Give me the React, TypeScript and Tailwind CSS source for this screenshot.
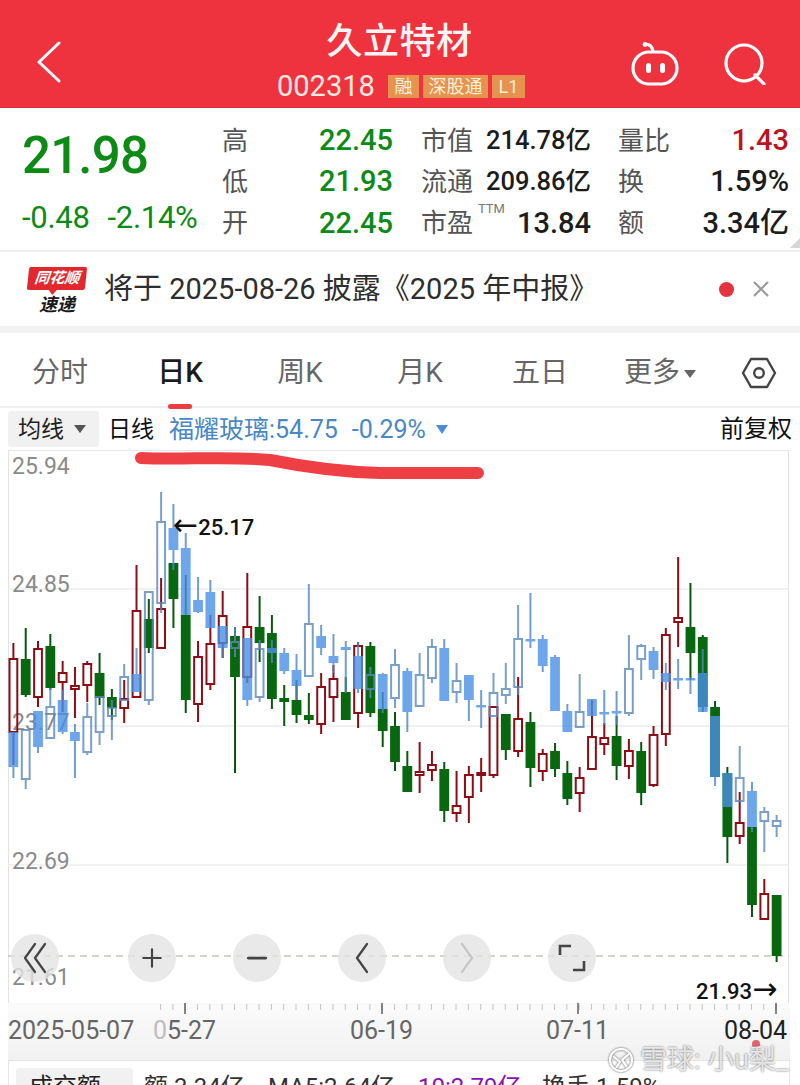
import React from 'react';
import { Minus, Plus } from 'lucide-react';

const FONT = "font-['Roboto','Noto_Sans_CJK_SC',sans-serif]";

type Bar = [number, number, number, number, number];

// [high, body top, body bottom, low, hollow] in page pixels
const MAIN: Bar[] = [
  [643, 659, 732, 765, 1], [628, 659, 695, 697, 0], [641, 649, 697, 707, 1], [634, 646, 688, 690, 0],
  [661, 673, 682, 712, 1], [667, 686, 689, 718, 1], [661, 664, 685, 702, 1], [653, 673, 698, 705, 0],
  [689, 697, 708, 720, 0], [680, 699, 708, 723, 1], [565, 611, 697, 697, 1], [599, 619, 648, 653, 0],
  [578, 609, 648, 648, 1], [563, 563, 599, 628, 0], [575, 615, 700, 713, 0], [641, 657, 704, 722, 1],
  [615, 644, 684, 690, 1], [591, 616, 643, 658, 1], [627, 636, 677, 773, 0], [573, 627, 677, 683, 1],
  [596, 627, 643, 662, 0], [615, 633, 699, 709, 0], [685, 698, 702, 726, 0], [680, 700, 715, 723, 0],
  [693, 715, 720, 724, 0], [673, 687, 724, 734, 1], [665, 679, 697, 722, 1], [677, 692, 720, 720, 0],
  [642, 646, 713, 728, 1], [642, 646, 713, 717, 0], [692, 709, 731, 747, 0], [712, 726, 762, 771, 0],
  [751, 766, 792, 792, 0], [742, 772, 775, 793, 1], [751, 765, 770, 781, 1], [762, 769, 811, 822, 0],
  [771, 806, 813, 822, 1], [766, 775, 797, 823, 1], [758, 773, 775, 792, 1], [707, 707, 775, 778, 1],
  [714, 714, 750, 760, 0], [677, 719, 751, 757, 1], [712, 722, 768, 787, 0], [749, 754, 771, 781, 1],
  [743, 751, 769, 777, 0], [761, 773, 799, 805, 0], [767, 778, 793, 812, 1], [700, 737, 769, 769, 1],
  [723, 738, 744, 755, 1], [716, 736, 766, 780, 0], [739, 751, 766, 779, 1], [742, 751, 793, 805, 0],
  [726, 735, 785, 787, 1], [628, 635, 734, 746, 1], [557, 618, 622, 647, 1], [583, 627, 653, 680, 0],
  [635, 637, 707, 712, 0], [701, 707, 777, 777, 0], [767, 773, 837, 863, 0], [792, 823, 836, 844, 1],
  [827, 827, 905, 917, 0], [879, 894, 919, 919, 1], [895, 895, 956, 962, 0],
];

// overlay series, 福耀玻璃
const OVERLAY: Bar[] = [
  [732, 732, 767, 778, 0], [730, 730, 779, 789, 1], [711, 711, 747, 753, 0], [688, 707, 738, 738, 1],
  [690, 700, 732, 734, 0], [724, 732, 741, 778, 0], [703, 717, 752, 755, 1], [697, 697, 732, 745, 1],
  [700, 708, 716, 740, 1], [664, 677, 700, 700, 1], [648, 674, 692, 692, 0], [592, 592, 700, 705, 1],
  [492, 522, 603, 613, 1], [504, 528, 550, 570, 0], [533, 548, 615, 615, 0], [577, 600, 612, 613, 0],
  [580, 592, 628, 628, 0], [626, 626, 648, 658, 0], [627, 642, 648, 657, 1], [638, 638, 700, 706, 0],
  [640, 649, 697, 702, 1], [640, 648, 653, 663, 0], [648, 653, 671, 674, 0], [654, 670, 686, 700, 0],
  [584, 624, 676, 676, 1], [625, 636, 648, 655, 0], [634, 656, 663, 673, 0], [641, 647, 650, 693, 0],
  [642, 656, 689, 693, 0], [667, 675, 689, 698, 1], [673, 674, 709, 713, 0], [649, 665, 698, 708, 1],
  [668, 671, 712, 732, 0], [653, 675, 706, 706, 1], [639, 647, 678, 683, 1], [639, 648, 701, 701, 0],
  [663, 681, 692, 703, 1], [675, 675, 700, 721, 0], [690, 705, 707, 728, 0], [673, 693, 716, 716, 1],
  [663, 689, 695, 704, 1], [605, 639, 687, 695, 1], [593, 639, 641, 648, 0], [635, 639, 666, 672, 0],
  [655, 657, 711, 711, 0], [704, 711, 732, 732, 0], [674, 712, 727, 727, 1], [699, 699, 716, 716, 0],
  [690, 712, 714, 725, 0], [691, 711, 713, 725, 0], [635, 669, 713, 716, 1], [644, 646, 659, 680, 1],
  [647, 651, 670, 679, 0], [663, 673, 682, 690, 0], [659, 678, 680, 689, 0], [677, 678, 680, 694, 0],
  [649, 673, 712, 712, 0], [716, 716, 777, 786, 0], [773, 773, 807, 807, 0], [746, 778, 801, 801, 1],
  [782, 791, 827, 832, 0], [807, 812, 821, 852, 1], [815, 821, 826, 837, 1],
];

const barX = (i: number) => 13.4 + i * 12.31;

const Candles = ({ bars, solid, hollow, wick, hollowWick }: { bars: Bar[]; solid: string; hollow: string; wick: string; hollowWick: string }) => (
  <g>
    {bars.map(([hi, top, bot, lo, open], i) => {
      const x = barX(i);
      const lineColor = open ? hollowWick : wick;
      return (
        <g key={i}>
          <line x1={x} x2={x} y1={hi} y2={top} stroke={lineColor} strokeWidth={2} />
          <line x1={x} x2={x} y1={bot} y2={lo} stroke={lineColor} strokeWidth={2} />
          {open ? (
            <rect x={x - 3.9} y={top} width={7.8} height={bot - top} fill="none" stroke={hollow} strokeWidth={2} />
          ) : (
            <rect x={x - 4.9} y={top} width={9.8} height={Math.max(bot - top, 2.5)} fill={solid} />
          )}
        </g>
      );
    })}
  </g>
);

const AXIS_LABELS: [string, number][] = [['25.94', 474], ['24.85', 592], ['23.77', 730], ['22.69', 869], ['21.61', 985]];

const KChart = () => (
  <svg viewBox="0 450 800 553" className="block h-[553px] w-[800px] font-['Roboto',sans-serif]">
    <line x1="8" x2="789" y1="450.5" y2="450.5" stroke="#e8e8e8" />
    <line x1="8.5" x2="8.5" y1="450" y2="1003" stroke="#e2e2e2" />
    <line x1="788.5" x2="788.5" y1="450" y2="1003" stroke="#e2e2e2" />
    {[589, 726, 865].map((y) => (
      <line key={y} x1="8" x2="789" y1={y} y2={y} stroke="#ececec" strokeWidth={1.5} />
    ))}
    <line x1="8" x2="789" y1="956" y2="956" stroke="#c9c5ba" strokeWidth={1.3} strokeDasharray="7 5" />
    {AXIS_LABELS.map(([t, y]) => (
      <text key={t} x="12" y={y} fontSize="23" fill="#8a8a8a">{t}</text>
    ))}
    <Candles bars={MAIN} solid="#07680f" hollow="#8c0d16" wick="#07570f" hollowWick="#8c0d16" />
    <g opacity={0.8}>
      <Candles bars={OVERLAY} solid="#4a90e8" hollow="#5a88bb" wick="#4f86c4" hollowWick="#5a88bb" />
    </g>
    <text x="173" y="535" fontSize="22" fontWeight="500" fill="#111">
      <tspan fontFamily="'DejaVu Sans',sans-serif" fontSize="30">←</tspan>25.17
    </text>
    <text x="696" y="999" fontSize="22" fontWeight="500" fill="#111">
      21.93<tspan fontFamily="'DejaVu Sans',sans-serif" fontSize="30">→</tspan>
    </text>
    {/* hand drawn marker under the overlay name */}
    <path d="M141 458 C180 460 230 456 270 460 C310 468 340 472 380 473 L478 473" fill="none" stroke="#ee3f45" strokeWidth={12} strokeLinecap="round" />
  </svg>
);

const ChartButton = ({ children }: { children: React.ReactNode }) => (
  <div className="flex h-[48px] w-[48px] items-center justify-center rounded-full bg-[#e3e3e3]/80 text-[#444]">
    {children}
  </div>
);

// tall thin chevrons used by the pan buttons
const Chevron = ({ d, color = '#444', width = 20 }: { d: string; color?: string; width?: number }) => (
  <svg width={width} height="32" viewBox={`0 0 ${width} 32`} fill="none" stroke={color} strokeWidth="2.2" strokeLinecap="round" strokeLinejoin="round">
    <path d={d} />
  </svg>
);

const StatCell = ({ label, value, color, wide }: { label: React.ReactNode; value: string; color: string; wide: string }) => (
  <div className={`flex items-center justify-between ${wide}`}>
    <span className="text-[26px] leading-none text-[#555]">{label}</span>
    <span className={`text-[29px] font-medium leading-none ${color}`}>{value}</span>
  </div>
);

const TICKS = Array.from({ length: 51 }, (_, i) => 160.6 + i * 12.31);

export default function App() {
  return (
    <div className={`relative h-[1085px] w-[800px] overflow-hidden bg-white ${FONT}`}>
      {/* Title bar */}
      <header className="grid h-[108px] grid-cols-[277px_1fr_277px] border-b border-[#d8323c] bg-[#ee333f] text-white">
        <div className="flex items-center pl-[36px] pt-[16px]">
          <svg width="26" height="42" viewBox="0 0 26 42" fill="none" stroke="#fff" strokeWidth="3" strokeLinecap="round" strokeLinejoin="round">
            <path d="M23 2 L3 21 L23 40" />
          </svg>
        </div>
        <div className="flex flex-col items-center">
          <div className="mt-[18px] pr-[3px] text-[36px] font-medium leading-[48px] tracking-[0.5px] text-[#fff5f3]">久立特材</div>
          <div className="mt-[8px] flex w-full items-center text-[#ffe9e0]">
            <span className="w-[111px] text-[29px] leading-[24px]">002318</span>
            <div className="flex items-center gap-[4px] text-[18px] leading-[23px] text-[#fff0d8]">
              <span className="flex h-[23px] w-[31px] items-center justify-center bg-[#e5934f]">融</span>
              <span className="flex h-[23px] w-[65px] items-center justify-center bg-[#e5934f]">深股通</span>
              <span className="flex h-[23px] w-[33px] items-center justify-center bg-[#e5934f]">L1</span>
            </div>
          </div>
        </div>
        <div className="flex items-center justify-end gap-[43px] pr-[36px] pt-[20px]">
          <svg width="50" height="46" viewBox="0 0 50 46" fill="none" stroke="#fff" strokeWidth="3.2" className="-translate-x-[1px]">
            <rect x="3" y="11" width="44" height="32" rx="16" />
            <path d="M15 3.5 C19 3 22 5 23 10" strokeLinecap="round" />
            <circle cx="15" cy="3.5" r="2.4" fill="#fff" stroke="none" />
            <rect x="16" y="22" width="5" height="10" rx="2.5" fill="#fff" stroke="none" />
            <rect x="30" y="22" width="5" height="10" rx="2.5" fill="#fff" stroke="none" />
          </svg>
          <svg width="42" height="42" viewBox="0 0 42 42" fill="none" stroke="#fff" strokeWidth="3.2" strokeLinecap="round">
            <circle cx="20" cy="20" r="18" />
            <path d="M31 32 L40 41" />
          </svg>
        </div>
      </header>

      {/* Quote summary */}
      <section className="relative flex h-[144px] border-b-2 border-[#eeeeee]">
        <div className="flex w-[222px] flex-col pl-[22px]">
          <div className="mt-[20px] text-[51px] font-medium leading-[56px] tracking-[-0.8px] text-[#0c8a16]">21.98</div>
          <div className="mt-[20px] flex gap-[18px] text-[31px] font-normal leading-[28px] tracking-[-0.3px] text-[#0c8a16]">
            <span>-0.48</span>
            <span>-2.14%</span>
          </div>
        </div>
        <div className="grid h-full w-[172px] grid-rows-3 pb-[6px] pt-[12px]">
          <StatCell label="高" value="22.45" color="text-[#0c8a16]" wide="w-[171px]" />
          <StatCell label="低" value="21.93" color="text-[#0c8a16]" wide="w-[171px]" />
          <StatCell label="开" value="22.45" color="text-[#0c8a16]" wide="w-[171px]" />
        </div>
        <div className="ml-[27px] grid h-full w-[170px] grid-rows-3 pb-[6px] pt-[12px]">
          <StatCell label="市值" value="214.78亿" color="!text-[25.5px] text-[#1c1c1c]" wide="w-[170px]" />
          <StatCell label="流通" value="209.86亿" color="!text-[25.5px] text-[#1c1c1c]" wide="w-[170px]" />
          <StatCell
            label={<span className="relative">市盈<sup className="absolute left-[57px] top-[-6px] text-[13px] leading-none text-[#777]">TTM</sup></span>}
            value="13.84"
            color="text-[#1c1c1c]"
            wide="w-[170px]"
          />
        </div>
        <div className="ml-[27px] grid h-full w-[171px] grid-rows-3 pb-[6px] pt-[12px]">
          <StatCell label="量比" value="1.43" color="text-[#bb1420]" wide="w-[171px]" />
          <StatCell label="换" value="1.59%" color="text-[#1c1c1c]" wide="w-[171px]" />
          <StatCell label="额" value="3.34亿" color="text-[#1c1c1c]" wide="w-[171px]" />
        </div>
        <div className="absolute bottom-[2px] right-0 h-0 w-0 border-b-[10px] border-l-[10px] border-b-[#d5d5d5] border-l-transparent" />
      </section>

      {/* Notice strip */}
      <section className="flex h-[81px] items-center border-b-[7px] border-[#f2f2f2] pl-[26px]">
        <div className="flex w-[62px] flex-col items-center pt-[3px]">
          <div className="relative flex h-[23px] w-[58px] -skew-x-6 items-center justify-center rounded-[2px] bg-[#e0282e] text-[15px] font-bold italic leading-none text-white">
            同花顺
            <span className="absolute -bottom-[5px] left-[22px] h-0 w-0 border-l-[4px] border-r-[4px] border-t-[5px] border-l-transparent border-r-transparent border-t-[#e0282e]" />
          </div>
          <div className="mt-[5px] text-[18px] font-bold italic leading-[20px] text-[#1a1a1a]">速递</div>
        </div>
        <div className="ml-[16px] flex-1 whitespace-nowrap text-[29px] leading-none text-[#2e2e2e]">将于 2025-08-26 披露《2025 年中报》</div>
        <div className="mr-[31px] flex items-center gap-[19px]">
          <span className="h-[15px] w-[15px] rounded-full bg-[#e2333f]" />
          <svg width="16" height="16" viewBox="0 0 16 16" stroke="#9a9a9a" strokeWidth="2.2"><path d="M1 1 L15 15 M15 1 L1 15" /></svg>
        </div>
      </section>

      {/* Period tabs */}
      <nav className="grid h-[75px] grid-cols-[repeat(6,120px)_1fr] items-center border-b-2 border-[#efefef] pt-[6px] text-[28px] leading-none text-[#666]">
        <span className="text-center">分时</span>
        <span className="relative text-center font-medium text-[#1c1c1c]">
          日K
          <span className="absolute left-[48px] top-[45px] h-[5px] w-[24px] rounded-full bg-[#ee3b40]" />
        </span>
        <span className="text-center">周K</span>
        <span className="text-center">月K</span>
        <span className="text-center">五日</span>
        <span className="flex items-center justify-center gap-[4px]">
          更多
          <span className="mt-[2px] h-0 w-0 border-l-[6px] border-r-[6px] border-t-[8px] border-l-transparent border-r-transparent border-t-[#666]" />
        </span>
        <span className="flex justify-center pr-[2px]">
          <svg width="36" height="32" viewBox="0 0 36 32" fill="none" stroke="#444" strokeWidth="2.4" strokeLinejoin="round">
            <path d="M10 2 H26 L34 16 L26 30 H10 L2 16 Z" />
            <circle cx="18" cy="16" r="4.8" />
          </svg>
        </span>
      </nav>

      {/* Chart toolbar */}
      <div className="flex h-[42px] items-center pl-[8px] pr-[8px] text-[23px] leading-none">
        <div className="flex h-[36px] w-[91px] items-center gap-[10px] rounded-[3px] bg-[#f1f1f1] pl-[10px] text-[#222]">
          均线
          <span className="h-0 w-0 border-l-[6px] border-r-[6px] border-t-[8px] border-l-transparent border-r-transparent border-t-[#555]" />
        </div>
        <span className="ml-[9px] text-[#111]">日线</span>
        <span className="ml-[15px] flex items-center text-[25px] text-[#4a87c4]">
          福耀玻璃:54.75
          <span className="ml-[14px]">-0.29%</span>
          <span className="ml-[10px] h-0 w-0 border-l-[6.5px] border-r-[6.5px] border-t-[9px] border-l-transparent border-r-transparent border-t-[#4a8cd8]" />
        </span>
        <span className="ml-auto text-[24px] text-[#111]">前复权</span>
      </div>

      {/* Candlestick area with zoom and pan controls */}
      <div className="relative">
        <KChart />
        <div className="absolute left-[11px] top-[484px] flex gap-[57px]">
          <div className="mr-[12px]">
            <ChartButton><Chevron width={26} d="M13 2 L3 16 L13 30 M23 2 L13 16 L23 30" /></ChartButton>
          </div>
          <ChartButton><Plus size={30} strokeWidth={1.7} /></ChartButton>
          <ChartButton><Minus size={30} strokeWidth={2.2} /></ChartButton>
          <ChartButton><Chevron d="M15 2 L5 16 L15 30" /></ChartButton>
          <ChartButton><Chevron color="#c6c6c6" d="M5 2 L15 16 L5 30" /></ChartButton>
          <ChartButton>
            <svg width="28" height="28" viewBox="0 0 28 28" fill="none" stroke="#444" strokeWidth="2.6">
              <path d="M2 11 V2 H13 M26 17 V26 H15" />
            </svg>
          </ChartButton>
        </div>
      </div>

      {/* Date axis */}
      <div className="ml-[8px] h-[58px] w-[782px] border-b border-[#e6e6e6] bg-gradient-to-b from-[#fbfbfb] to-[#f1f1f1]">
        <svg viewBox="8 0 782 12" className="block h-[12px] w-[782px]">
          {TICKS.map((x) => (
            <line key={x} x1={x} x2={x} y1="1" y2="7" stroke="#c4c4c4" />
          ))}
          {[185, 382, 578, 776].map((x) => (
            <line key={x} x1={x} x2={x} y1="0" y2="11" stroke="#555" strokeWidth="1.4" />
          ))}
        </svg>
        <div className="mt-[2px] flex text-[25px] leading-[28px] text-[#666]">
          <span className="w-[145px]">2025-05-07</span>
          <span className="w-[197px]"><span className="text-[#bdbdbd]">0</span>5-27</span>
          <span className="w-[196px]">06-19</span>
          <span className="w-[178px]">07-11</span>
          <span className="text-[#222]">08-04</span>
        </div>
      </div>

      {/* Volume legend, cut off by the bottom of the screen */}
      <div className="ml-[8px] flex h-[24px] w-[782px] items-start overflow-hidden border-x border-[#e6e6e6] pl-[7px] pt-[7px] text-[24px] leading-[28px] text-[#333]">
        <div className="flex h-[40px] w-[117px] items-start gap-[16px] rounded-[3px] bg-[#f1f1f1] pl-[13px] pt-[5px] text-[#222]">
          成交额
          <span className="mt-[12px] h-0 w-0 border-l-[6px] border-r-[6px] border-t-[8px] border-l-transparent border-r-transparent border-t-[#555]" />
        </div>
        <span className="ml-[11px] mt-[5px] w-[124px]">额 3.34亿</span>
        <span className="mt-[5px] w-[150px]">MA5:2.64亿</span>
        <span className="mt-[5px] w-[124px] text-[#8a12b8]">10:2.79亿</span>
        <span className="mt-[5px]">换手 1.59%</span>
      </div>

      {/* Watermark */}
      <span className="absolute left-[752px] top-[1040px] h-[8px] w-[8px] rounded-full bg-[#e4636a]" />
      <div className="absolute left-[608px] top-[1046px] flex items-center gap-[6px] text-[27px] leading-[28px] text-white/80 [text-shadow:0_0_2px_#555]">
        <svg width="26" height="24" viewBox="0 0 26 24" fill="none" stroke="#fff" strokeWidth="2.2" className="drop-shadow-[0_0_1px_#555]">
          <circle cx="13" cy="12" r="11" />
          <path d="M5 8 L12 14 L8 20 M21 6 L14 12 L19 19" />
        </svg>
        <span className="whitespace-nowrap">雪球: 小u梨_</span>
      </div>
    </div>
  );
}
